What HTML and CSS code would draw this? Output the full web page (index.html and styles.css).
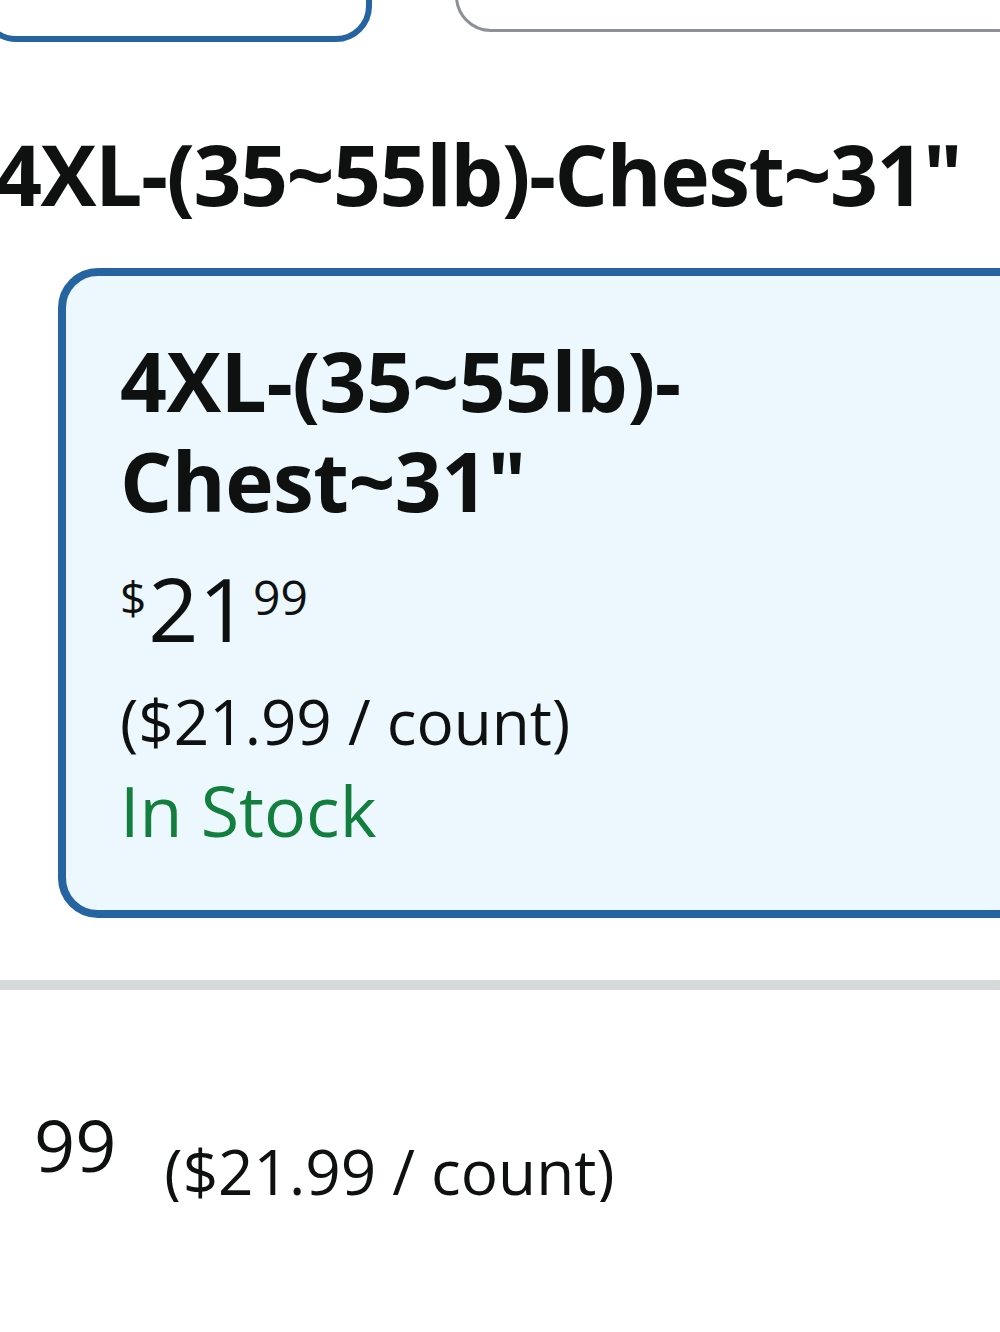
FILE: index.html
```html
<!DOCTYPE html>
<html lang="en">
<head>
    <meta charset="UTF-8">
    <meta name="viewport" content="width=device-width, initial-scale=1.0">
    <title>Size options</title>
    <link rel="stylesheet" href="styles.css">
</head>
<body>

    <!-- Bottoms of the size tiles above the selection -->
    <div class="tile-row">
        <div class="tile tile-selected"></div>
        <div class="tile tile-plain"></div>
    </div>

    <h2 class="size-name">4XL-(35~55lb)-Chest~31"</h2>

    <!-- Selected size card -->
    <div class="size-card">
        <h3 class="card-title">4XL-(35~55lb)-<br>Chest~31"</h3>
        <div class="price">
            <span class="price-symbol">$</span><span class="price-whole">21</span><span class="price-fraction">99</span>
        </div>
        <div class="unit-price">($21.99 / count)</div>
        <div class="stock">In Stock</div>
    </div>

    <div class="divider"></div>

    <div class="price-row">
        <span class="price-cents">99</span>
        <span class="unit-price-small">($21.99 / count)</span>
    </div>

</body>
</html>
```

FILE: styles.css
```css
* {
    margin: 0;
    padding: 0;
    box-sizing: border-box;
}

body {
    font-family: 'Open Sans', 'Noto Sans', sans-serif;
    font-stretch: 96%;
    background-color: #fff;
    color: #0f1111;
    overflow: hidden;
}

.tile-row {
    display: flex;
    height: 44px;
    overflow: hidden;
}

.tile {
    height: 120px;
    flex-shrink: 0;
}

.tile-selected {
    width: 392px;
    margin-left: -20px;
    margin-top: -78px;
    border: 6px solid #2563a1;
    border-radius: 36px;
}

.tile-plain {
    width: 600px;
    margin-left: 83px;
    margin-top: -88px;
    border: 3px solid #8d9096;
    border-radius: 36px;
}

.size-name {
    font-size: 84px;
    font-weight: 700;
    font-stretch: 88%;
    letter-spacing: -1.5px;
    line-height: 1;
    margin-top: 88px;
    margin-left: -6px;
    white-space: nowrap;
}

.size-card {
    margin-top: 52px;
    margin-left: 58px;
    margin-right: -40px;
    height: 650px;
    padding: 54px 54px 0;
    background-color: #edf7fe;
    border: 8px solid #2563a1;
    border-radius: 40px;
}

.card-title {
    font-size: 82px;
    font-weight: 700;
    font-stretch: 88%;
    letter-spacing: -0.5px;
    line-height: 100px;
}

.price {
    display: flex;
    align-items: flex-start;
    margin-top: 34px;
    line-height: 1;
}

.price-symbol {
    font-size: 46px;
    margin-top: 10px;
    margin-right: 2px;
}

.price-whole {
    font-size: 88px;
}

.price-fraction {
    font-size: 48px;
    margin-top: 9px;
    margin-left: 4px;
}

.unit-price {
    font-size: 62px;
    margin-top: 32px;
    line-height: 1.2;
}

.stock {
    font-size: 70px;
    color: #137f3f;
    line-height: 1.2;
    margin-top: 10px;
}

.divider {
    height: 10px;
    margin-top: 62px;
    background-color: #d5d9d9;
}

.price-row {
    display: flex;
    align-items: flex-start;
    margin-top: 118px;
    padding-left: 34px;
}

.price-cents {
    font-size: 72px;
    line-height: 1;
}

.unit-price-small {
    font-size: 62px;
    line-height: 1;
    margin-top: 32px;
    margin-left: 48px;
}
```
